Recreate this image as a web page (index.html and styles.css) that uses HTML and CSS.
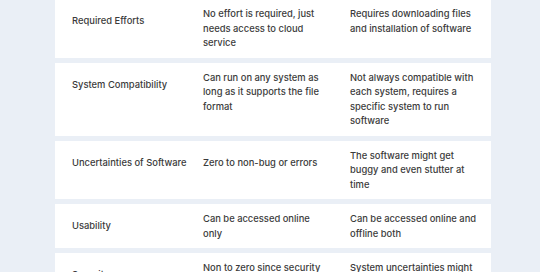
FILE: index.html
```html
<!DOCTYPE html>
<html lang="en">
<head>
  <meta charset="UTF-8" />
  <title>Cloud vs Installed Software</title>
  <link rel="stylesheet" href="styles.css">
</head>
<body>
  <div class="compare">
    <div class="row">
      <div class="cell label">Required Efforts</div>
      <div class="cell">No effort is required, just needs access to cloud service</div>
      <div class="cell">Requires downloading files and installation of software</div>
    </div>
    <div class="row">
      <div class="cell label">System Compatibility</div>
      <div class="cell">Can run on any system as long as it supports the file format</div>
      <div class="cell">Not always compatible with each system, requires a specific system to run software</div>
    </div>
    <div class="row">
      <div class="cell label">Uncertainties of Software</div>
      <div class="cell">Zero to non-bug or errors</div>
      <div class="cell">The software might get buggy and even stutter at time</div>
    </div>
    <div class="row">
      <div class="cell label">Usability</div>
      <div class="cell">Can be accessed online only</div>
      <div class="cell">Can be accessed online and offline both</div>
    </div>
    <div class="row">
      <div class="cell label">Security concerns</div>
      <div class="cell">Non to zero since security is handled by the provider</div>
      <div class="cell">System uncertainties might cause security issues</div>
    </div>
  </div>
</body>
</html>
```
FILE: styles.css
```css
* { box-sizing: border-box; margin: 0; padding: 0; }

body {
  background: #eaeff6;
  font-family: "Inter", "Open Sans", sans-serif;
  font-size: 9.4px;
  font-weight: 500;
  color: #3b3b3b;
  line-height: 14.5px;
}

.compare {
  display: flex;
  flex-direction: column;
  gap: 5px;
  width: 436px;
  margin: -1px 0 0 55px;
}

.row {
  display: grid;
  grid-template-columns: 131px 147px 1fr;
  align-items: start;
  background: #fff;
  padding: 8px 13px 7px 17px;
}

.cell {
  min-height: 29px;
  display: flex;
  align-items: center;
}

.cell:nth-child(2) { padding-right: 26px; }
```
